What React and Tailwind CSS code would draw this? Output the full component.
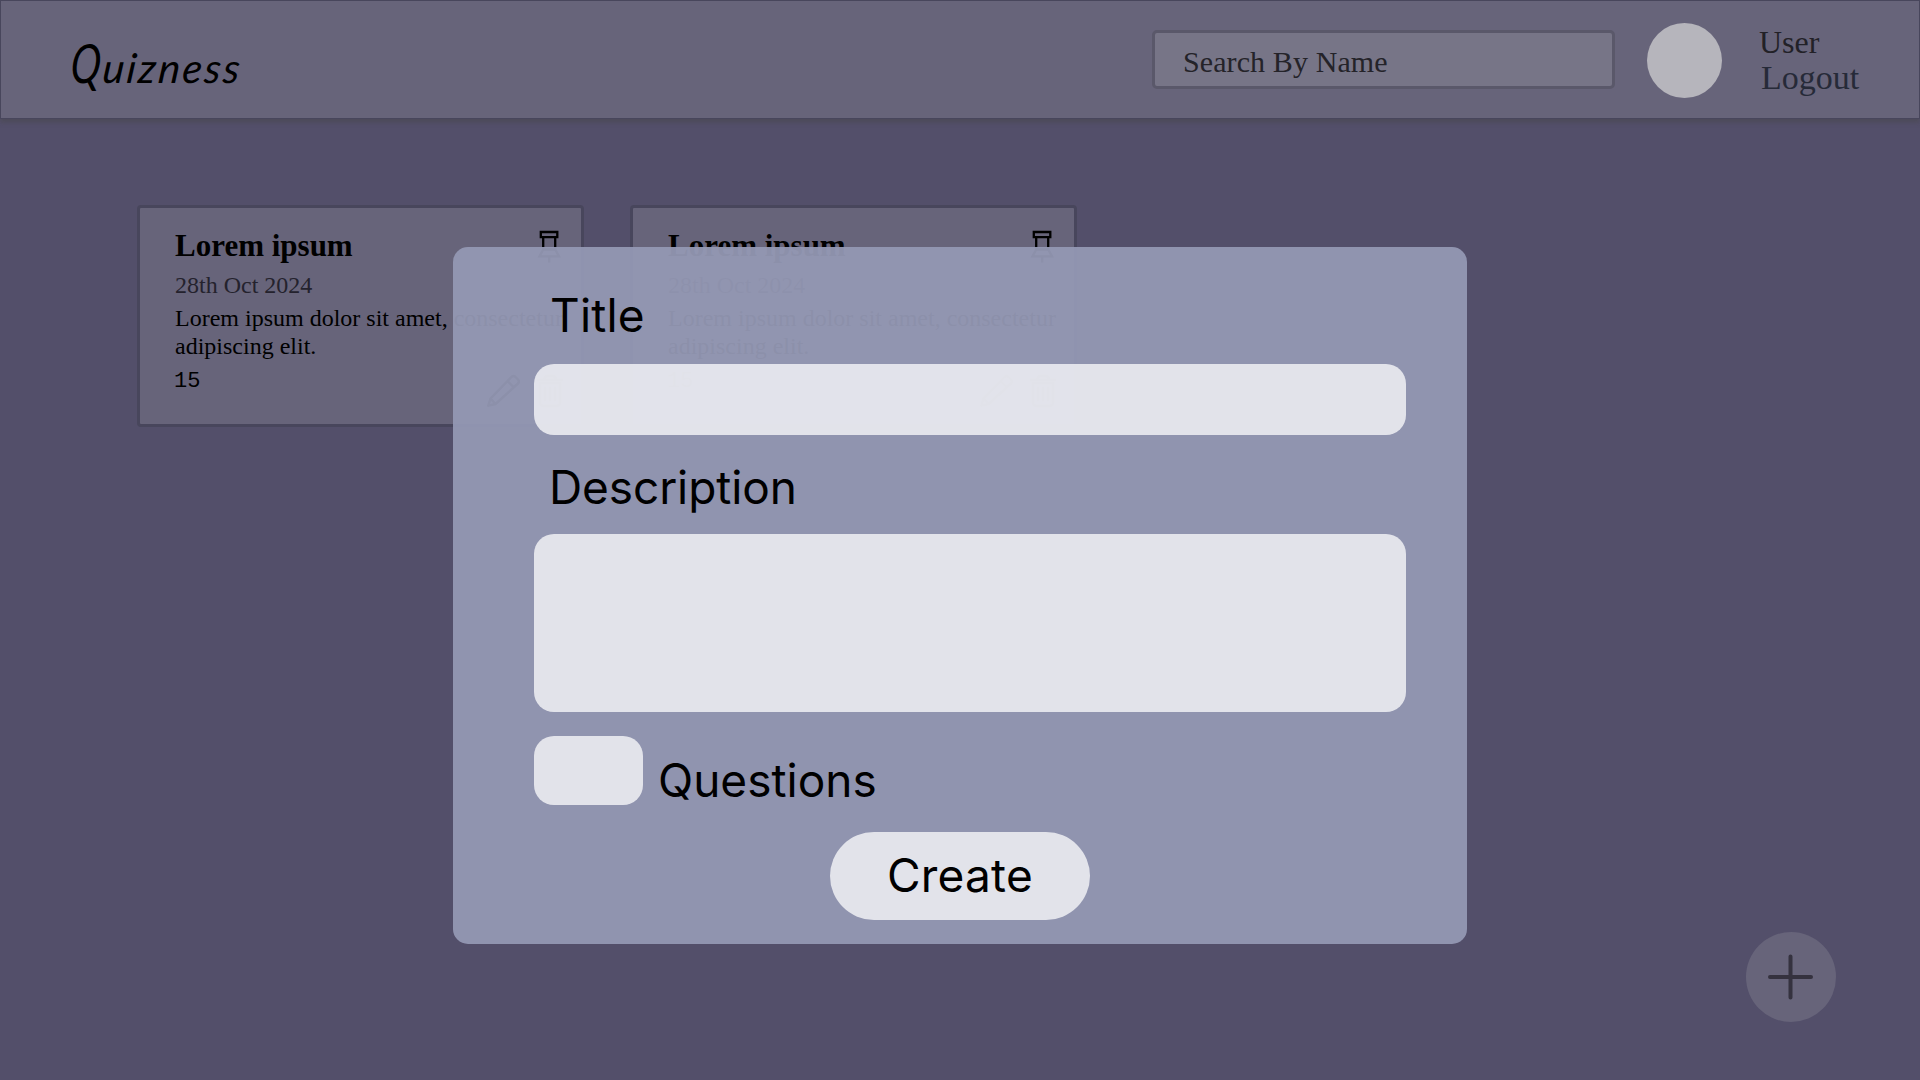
function Pin() {
  return (
    <svg width="24" height="36" viewBox="0 0 24 36" fill="none" stroke="#000" strokeWidth="2.300">
      <path d="M3.800 4h16.500v5.200H3.800zM6.200 9v12.500M18.200 9v12.500M6.200 21.500L2.500 28.300h19.500L18.200 21.500zM12.200 28v6.500" />
    </svg>
  );
}

function Pencil() {
  return (
    <svg width="34" height="34" viewBox="0 0 34 34" fill="none" stroke="#000" strokeWidth="2.400" strokeLinejoin="round">
      <path d="M2.300 31.700L4.500 24.500 25.500 3q2-1.800 4 0l2.500 2.500q1.800 2 0 4L9.500 30zM21.500 7l6.500 6.500M4.500 24.500l5 5.500" />
    </svg>
  );
}

function Trash() {
  return (
    <svg width="28" height="34" viewBox="0 0 28 34" fill="none" stroke="#000" strokeWidth="2.400" strokeLinecap="round">
      <path d="M2 6h24M8 6q0-4 4-4h4q4 0 4 4M4 9v19q0 4 4 4h12q4 0 4-4V9zM9 14v12M14 14v12M19 14v12" />
    </svg>
  );
}

function Card() {
  return (
    <article className="flex h-[222px] w-[447px] flex-col rounded-[4px] border-[3px] border-[#48465c] bg-[#67647a] pl-[35px] font-['Liberation_Serif',serif] text-black">
      <div className="flex h-[59px] items-start justify-between pt-[18px] pr-[20px]">
        <h2 className="pt-[1px] text-[31px] leading-[37px] font-bold whitespace-nowrap">Lorem ipsum</h2>
        <div className="pt-[2px]"><Pin /></div>
      </div>
      <p className="h-[37px] pt-[4px] text-[24px] leading-[28px] text-[#24222d]">28th Oct 2024</p>
      <p className="w-[396px] text-[24px] leading-[28px]">Lorem ipsum dolor sit amet, consectetur adipiscing elit.</p>
      <div className="flex justify-between pr-[17px]">
        <span className="-ml-[1px] pt-[8px] font-['Liberation_Mono',monospace] text-[22px] leading-[28px]">15</span>
        <div className="flex gap-[16px] pt-[14px]"><Pencil /><Trash /></div>
      </div>
    </article>
  );
}

export default function App() {
  return (
    <div className="relative flex h-[1080px] w-[1920px] flex-col overflow-hidden bg-[#534f6a]">
      <header className="flex h-[119px] shrink-0 items-start border border-[#48465c] bg-[#67647a] font-['Liberation_Serif',serif] shadow-[0_4px_4px_rgba(70,70,70,0.4)]">
        <h1 className="ml-[70px] mt-[32px] flex w-[1081px] items-baseline font-['Lato',cursive] italic text-black">
          <span className="w-[32px] origin-left scale-x-75 -skew-x-6 text-[54px] leading-[60px]">Q</span>
          <span className="-skew-x-6 text-[41px] leading-[60px] tracking-[2.4px]">uizness</span>
        </h1>
        <div className="mt-[29px] flex h-[59px] w-[463px] items-center rounded-[5px] border-[3px] border-[#5a586a] bg-[#777587] pt-[4px] pl-[28px]">
          <span className="text-[30px] tracking-[0.1px] whitespace-nowrap text-[#242329]">Search By Name</span>
        </div>
        <div className="ml-[32px] mt-[22px] size-[75px] rounded-full bg-[#b6b5bc]" />
        <nav className="ml-[37px] mt-[24px] flex flex-col whitespace-nowrap">
          <span className="text-[32px] leading-[35px] text-[#222127]">User</span>
          <span className="ml-[2px] text-[34px] leading-[35px] text-[#262a38]">Logout</span>
        </nav>
      </header>
      <main className="flex gap-[46px] pt-[86px] pl-[137px]">
        <Card />
        <Card />
      </main>
      <button className="absolute top-[932px] left-[1746px] flex size-[90px] items-center justify-center rounded-full bg-[#67647a]" aria-label="Add quiz">
        <svg width="46" height="46" viewBox="0 0 46 46" stroke="#35323f" strokeWidth="4" strokeLinecap="round">
          <path d="M22.500 2.500v41M2 23h41" />
        </svg>
      </button>
      <form className="absolute top-[247px] left-[453px] flex h-[697px] w-[1014px] flex-col rounded-[15px] bg-[#9498b3]/95 pl-[81px] font-['Inter',sans-serif] text-[46px] leading-[58px] text-black">
        <label className="h-[117px] pt-[39px] pl-[16px] tracking-[0.2px]">Title</label>
        <div className="h-[71px] w-[872px] rounded-[20px] bg-white/74" />
        <label className="h-[99px] pt-[23px] pl-[15px] tracking-[-0.1px]">Description</label>
        <div className="h-[178px] w-[872px] rounded-[20px] bg-white/74" />
        <div className="mt-[24px] flex">
          <div className="h-[69px] w-[109px] rounded-[20px] bg-white/74" />
          <label className="h-[96px] pt-[15px] pl-[15px]">Questions</label>
        </div>
        <button type="button" className="ml-[296px] h-[88px] w-[260px] rounded-full bg-white/74 pb-[2px] tracking-[0.2px]">Create</button>
      </form>
    </div>
  );
}
